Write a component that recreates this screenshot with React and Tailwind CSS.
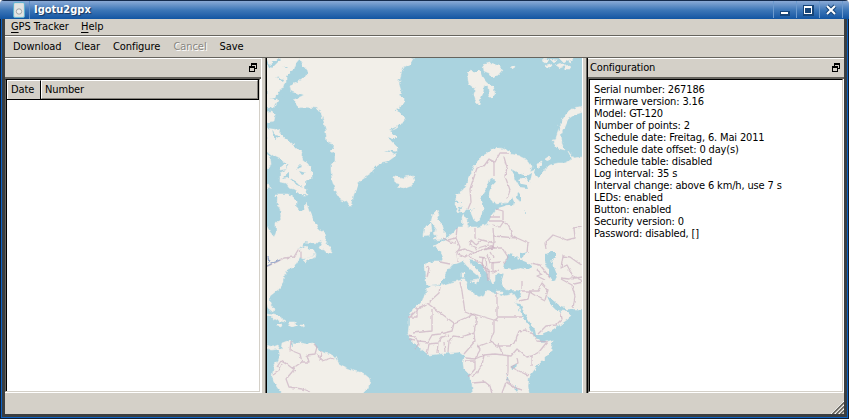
import React from "react";

const LAND = [
  // Greenland
  "M300 57L301 63L305 68L308 72L307 76L302 79L296 83L290 86L291 91L297 93L304 95L298 98L293 100L298 105L298 108L304 107L317 108L321 113L324 122L326 132L327 142L332 144L335 148L331 151L335 154L335 160L331 165L331 170L332 180L334 186L336 193L340 199L346 202L348 205L352 205L353 199L354 193L357 187L359 181L365 177L371 173L374 168L378 164L387 162L394 157L397 152L397 147L391 141L397 137L391 131L397 128L401 124L405 118L400 113L399 107L404 103L404 98L399 95L401 91L399 84L401 74L404 67L410 64L414 57Z",
  // Arctic Canada
  "M266 57L301 57L296 63L294 69L290 72L286 76L286 82L284 88L278 91L276 97L278 101L275 107L267 108Z",
  "M266 112L272 111L275 116L274 121L266 123Z",
  "M266 128L278 130L284 137L289 141L295 146L302 153L301 158L308 164L312 172L312 179L305 180L305 187L308 195L302 195L296 190L290 188L286 183L280 182L280 173L286 170L288 165L280 159L274 156L267 151Z",
  "M266 154L270 156L271 164L268 169L266 168Z",
  "M282 165L286 165L286 169L280 170ZM266 183L272 188L266 189ZM275 195L277 195L275 197Z",
  // Labrador, Quebec and the east coast
  "M278 194L288 194L293 198L296 201L296 208L301 211L305 208L306 202L309 211L314 221L318 228L325 233L326 238L319 243L305 242L298 249L306 246L309 250L315 250L314 254L307 258L303 259L300 257L297 262L294 267L288 269L284 275L284 282L280 288L275 292L270 296L270 303L274 309L273 312L268 308L266 300L266 225L270 232L274 237L276 233L276 223L281 217L280 208L277 203Z",
  "M322 242L324 237L326 237L325 243L330 247L332 253L327 252L319 248ZM303 261L309 257L316 254L315 257L306 262Z",
  "M282 275L284 275L284 280Z",
  // Caribbean
  "M266 314L274 315L280 317L286 321L285 322L280 321L274 318L266 316ZM289 322L294 322L298 325L292 327L288 325ZM278 325L282 325L281 327L278 326ZM301 325L305 325L304 327L301 326Z",
  // South America
  "M266 345L273 347L278 345L281 350L282 343L290 340L292 343L300 343L306 344L314 343L318 349L324 353L330 354L335 357L338 363L343 366L355 371L363 373L369 378L370 381L368 388L362 394L282 394L277 387L272 377L274 366L280 357L279 349L271 350L266 348Z",
  // Iceland
  "M394 177L397 175L401 180L405 177L413 175L415 181L411 186L403 189L397 187L400 184L395 183Z",
  // Svalbard
  "M467 73L470 70L475 73L479 69L482 77L487 83L493 86L495 94L492 98L489 96L488 87L484 84L483 93L480 100L479 105L475 101L473 94L475 89L469 84ZM483 65L490 63L499 66L502 70L498 75L493 78L489 73L484 71ZM511 67L514 65L515 67L512 69Z",
  // Franz Josef Land
  "M541 60L545 58L548 61L545 63ZM550 59L557 60L554 63ZM559 58L574 58L572 62L568 60L564 63ZM545 65L551 64L552 67L547 67ZM556 65L561 63L565 66L560 68ZM565 66L569 65L570 69L566 69Z",
  // Novaya Zemlya
  "M583 106L574 108L567 113L563 119L559 129L556 138L553 142L557 148L565 150L562 144L561 134L565 126L568 119L574 115L583 112Z",
  "M546 159L549 157L550 160L547 161Z",
  // Continental Europe and Asia
  "M583 157L574 158L569 151L571 155L572 160L565 163L558 163L550 165L545 169L540 172L536 171L541 166L542 162L537 164L537 168L530 171L532 166L527 160L519 156L511 154L510 152L501 148L492 149L486 154L481 157L478 162L474 166L471 174L467 184L463 190L457 194L455 204L457 211L463 213L468 209L471 207L471 213L474 220L477 222L480 218L483 211L483 205L480 199L483 193L487 187L491 178L496 178L496 182L491 187L489 194L491 200L497 204L508 202L502 205L496 207L495 212L491 217L488 224L478 227L470 227L467 226L468 220L464 214L462 218L463 227L458 227L454 232L448 237L445 241L438 244L434 246L441 251L443 258L440 262L433 262L425 264L426 274L425 282L429 286L438 285L445 278L445 274L452 265L458 263L463 261L467 266L473 271L479 276L478 280L482 275L479 272L472 265L469 259L475 260L482 266L486 272L490 277L492 284L495 281L495 276L500 273L504 274L501 281L503 287L508 290L517 290L522 291L520 298L517 300L519 309L523 316L528 326L534 337L539 336L550 331L561 324L568 319L571 315L567 311L562 311L556 309L552 303L548 297L554 301L559 305L566 309L583 309Z",
  // Great Britain and Ireland
  "M433 214L437 210L439 215L437 219L442 224L444 231L447 235L445 239L433 240L437 236L433 233L437 230L434 226L431 222ZM426 226L431 224L432 231L429 235L423 236L424 229Z",
  "M462 273L465 273L464 278L462 277ZM462 279L465 279L464 284L462 283ZM471 281L478 280L477 284L472 282ZM496 291L503 291L503 293L497 293ZM512 287L516 286L514 289Z",
  // Africa
  "M430 286L440 286L452 282L464 280L467 282L466 288L470 291L479 297L484 295L486 291L495 293L505 296L513 294L516 299L520 307L526 320L532 330L536 338L542 343L553 340L551 350L546 357L537 366L529 377L528 386L529 394L473 394L472 385L469 374L464 369L463 363L465 356L460 352L450 353L438 354L429 355L420 348L412 341L408 334L409 325L409 317L413 309L422 302L425 293Z",
];

const WATER = [
  // Red Sea
  "M515 301L518 304L520 303L524 312L529 321L535 330L536 335L543 335L547 337L540 340L535 337L531 331L524 318L519 309Z",
  // White Sea
  "M512 169L519 173L527 176L532 173L530 183L525 178L518 180L522 184L527 185L528 188L519 187L515 180Z",
  "M536 165L540 171L546 169L542 174L538 177L534 173Z",
  // Gulf of Finland and lakes
  "M490 206L508 203L512 197L514 202L513 206L508 205L498 208L493 211ZM518 192L521 195L521 201L517 199ZM524 209L526 212L524 213Z",
  "M473 209L475 208L472 212Z",
  // Black, Azov and Caspian seas
  "M508 254L514 255L518 259L526 262L532 267L529 270L520 268L512 270L503 268L505 261ZM520 254L526 252L524 257L520 259Z",
  "M545 254L550 252L556 252L556 256L551 261L554 267L557 275L555 281L549 277L549 270L545 262Z",
  // Persian Gulf
  "M547 296L552 300L560 306L564 307L563 312L557 311L551 305Z",
  "M301 199L305 199L304 205ZM318 228L321 227L320 230ZM303 243L310 243L306 246Z",
  "M511 366L517 365L516 369L512 370ZM507 374L509 381L507 380ZM515 385L518 390L516 393Z",
  "M292 341L293 346L291 345Z",
  // Arctic inlets
  "M266 60L271 66L268 68ZM270 65L279 58L281 59L272 68ZM285 96L276 99L270 98L276 97Z",
  "M289 66L282 67L287 68ZM283 79L276 77L282 81ZM272 130L275 135L280 136L275 139ZM276 181L274 176L280 178ZM290 178L294 183L302 187L297 182ZM300 165L296 169L302 167ZM289 172L282 178L289 177ZM306 173L299 171L302 175Z",
  "M398 126L389 130L397 131L390 132ZM400 141L387 137L395 144ZM399 152L384 150L394 154ZM335 145L329 148L334 150ZM401 109L395 110L401 113Z",
  "M455 200L462 203L456 203ZM458 209L463 206L459 211Z",
];

const BORDERS = [
  "M477 168L484 166L489 159L495 162L500 153L509 153M489 159L494 163L494 176M504 157L507 168L505 176L510 190L507 199",
  "M477 168L473 180L470 189L471 202L468 209",
  "M457 228L456 238L460 247L457 253L458 262M443 238L450 242L456 243M448 240L456 238M440 262L450 264M457 251L465 249L475 253L482 250L493 248L494 241L493 228",
  "M475 228L475 238L482 240L490 242L493 243M471 240L476 245L482 240M471 240L470 245L476 248L477 253",
  "M489 221L502 221L509 226L512 235L517 238L528 243L527 253M494 236L505 237L517 238M493 225L500 227L504 221M496 209L503 211L503 220M490 217L500 217",
  "M482 250L488 248L496 248L502 248L508 257L504 264M493 257L490 252M487 254L490 263L502 262M469 256L477 261L482 263L487 273L488 282M479 257L486 258L487 271L493 273L499 270",
  "M458 254L465 257L472 253M478 248L488 245L495 248M483 257L482 265L489 270L489 280M493 272L493 262",
  "M583 227L574 228L575 238L567 240L553 235L545 243L546 249M531 263L540 265L544 270L550 278M536 269L542 274L537 276L545 280M583 266L577 262L570 257L563 256L561 268L567 265L574 278L583 277M561 278L569 279L575 277L583 281",
  "M426 267L429 268L427 278M522 291L530 291L538 291L542 283L548 290L545 300M522 281L522 289M530 291L528 299L519 301M528 291L536 296L545 301M538 334L546 326L556 325M556 325L562 319L561 314M561 279L572 285L575 296L573 308M574 284L583 282",
  "M440 287L439 293L428 303L418 309L409 318M408 317L417 317L417 308L425 305M427 303L454 323L474 314L497 321M460 282L462 291L465 312L473 315M497 293L497 317L522 317M497 317L494 321L494 332L490 342L477 347",
  "M432 309L432 331L412 333M454 323L452 331L440 334L432 335L428 342L418 341M472 314L477 317L474 333L460 337L453 336M474 333L475 341L470 347L464 354M477 344L480 350L475 359L466 358",
  "M490 341L497 346L510 346L516 340L519 331M475 359L484 355L495 354L503 355L511 356L517 349L526 357L532 356L532 366M498 344L503 355M519 331L526 330L535 336L537 341L547 342L539 352L532 356",
  "M508 356L508 371L507 380L515 388L523 390M517 357L518 363L511 367L525 374L529 375M484 355L482 365L477 373L472 376M465 361L475 361L475 369L469 376M472 383L485 382L490 386L492 394M515 388L506 382L502 393",
  "M409 335L416 337L419 345L415 349M427 354L429 344L438 343L442 337L449 335M437 354L438 343M445 352L444 342M448 352L449 341L453 336",
  "M409 336L416 336M409 339L415 340",
  "M266 267L277 262L284 258L294 257L298 250L301 252L301 258",
  "M291 341L290 350L300 354L302 362L296 366L292 372L286 379L289 387L302 389L310 392M302 362L309 362L307 355L315 354L317 347L314 344M317 353L322 361L331 358L334 359M321 351L320 361M281 361L277 367M281 361L288 365L296 371M273 375L279 371L282 364",
];

const INFO = [
  "Serial number: 267186",
  "Firmware version: 3.16",
  "Model: GT-120",
  "Number of points: 2",
  "Schedule date: Freitag, 6. Mai 2011",
  "Schedule date offset: 0 day(s)",
  "Schedule table: disabled",
  "Log interval: 35 s",
  "Interval change: above 6 km/h, use 7 s",
  "LEDs: enabled",
  "Button: enabled",
  "Security version: 0",
  "Password: disabled, []",
];

function FloatIcon() {
  return (
    <svg width="8" height="9" viewBox="0 0 8 9" shapeRendering="crispEdges" className="shrink-0">
      <path d="M2 0h6v6H6V5h1V2H3v1H2z" fill="#000" />
      <path d="M0 3h6v6H0zM1 5v3h4V5z" fillRule="evenodd" fill="#000" />
    </svg>
  );
}

function DeviceIcon() {
  return (
    <svg width="12" height="16" viewBox="0 0 12 16">
      <rect x=".5" y=".5" width="11" height="15" rx="1.5" fill="#d8dddd" stroke="#62b3d2" />
      <rect x="2" y="2" width="8" height="12" fill="#e2e4e2" />
      <circle cx="6" cy="9.5" r="2.7" fill="#eee" stroke="#a0a5a5" />
    </svg>
  );
}

function WorldMap() {
  return (
    <svg width="315" height="335" viewBox="267 58 315 335" className="block shrink-0 bg-[#aad3df]">
      <defs>
        <filter id="coast" filterUnits="userSpaceOnUse" x="257" y="48" width="335" height="355" colorInterpolationFilters="sRGB">
          <feTurbulence type="fractalNoise" baseFrequency=".22" numOctaves="2" seed="4" result="noise" />
          <feDisplacementMap in="SourceGraphic" in2="noise" scale="4.5" xChannelSelector="R" yChannelSelector="G" />
          <feGaussianBlur stdDeviation=".35" />
        </filter>
        <filter id="soft" filterUnits="userSpaceOnUse" x="257" y="48" width="335" height="355" colorInterpolationFilters="sRGB">
          <feTurbulence type="fractalNoise" baseFrequency=".2" numOctaves="2" seed="9" result="noise" />
          <feDisplacementMap in="SourceGraphic" in2="noise" scale="3" xChannelSelector="R" yChannelSelector="G" />
          <feGaussianBlur stdDeviation=".3" />
        </filter>
      </defs>
      <g filter="url(#coast)">
        <rect x="250" y="40" width="350" height="370" fill="#aad3df" />
        {LAND.map((d) => (
          <path key={d} d={d} fill="#f2efe9" stroke="#f2efe9" strokeWidth=".5" strokeLinejoin="round" />
        ))}
        {WATER.map((d) => (
          <path key={d} d={d} fill="#aad3df" />
        ))}
      </g>
      <g filter="url(#soft)">
        {BORDERS.map((d) => (
          <path key={d} d={d} fill="none" stroke="#cbb0c2" strokeOpacity=".7" strokeWidth="1.3" strokeLinejoin="round" />
        ))}
        <path d="M267 266L273 263L280 260M268 256L269 263" stroke="#9aaacb" strokeWidth="1.3" fill="none" />
      </g>
    </svg>
  );
}

function TitleBar() {
  return (
    <div className="flex h-[19px] shrink-0 items-stretch border-t border-[#152b4d] bg-linear-to-b from-[#8aaad6] via-[#3d77b8] to-[#1055a2] pl-[5px]">
      <div className="flex w-[25px] items-center justify-center border-r border-[#5d8fc9] pl-1">
        <DeviceIcon />
      </div>
      <div className="flex-1 pt-px pl-[4px] text-[11px] leading-[15px] font-bold text-white [text-shadow:1px_1px_1px_#16365f]">
        Igotu2gpx
      </div>
      <svg width="76" height="18" viewBox="773 1 76 18">
        <path d="M773.5 1v17M796.5 1v17M819.5 1v17M842.5 1v17" stroke="#6c9ace" />
        <g shapeRendering="crispEdges">
          <path d="M780 11h10v5h-10zM803 5h11v11h-11z" fill="#174578" />
          <path d="M781 12h7v2h-7z" fill="#fff" />
          <path d="M804 6h8v8h-8zM805 8v5h6V8z" fillRule="evenodd" fill="#fff" />
        </g>
        <path d="M827 6l8 8M835 6l-8 8" stroke="#174578" strokeWidth="4" />
        <path d="M827 6l8 8M835 6l-8 8" stroke="#fff" strokeWidth="2" />
      </svg>
    </div>
  );
}

export default function App() {
  return (
    <div className="flex h-[419px] w-[849px] flex-col overflow-hidden rounded-t-[4px] bg-[#d4d0c8] font-['DejaVu_Sans_Condensed','DejaVu_Sans',sans-serif] text-[11px] leading-[12px] whitespace-nowrap text-black [font-stretch:condensed]">
      <TitleBar />
      <div className="flex h-[400px] border-x border-b border-[#101d30]">
        <div className="flex flex-1 border-x border-b border-[#0b62c4]">
          <div className="flex flex-1 flex-col border-x-[3px] border-b-[3px] border-[#3a3e41]">
            <div className="flex h-[17px] border-b border-[#66645e] pt-[2px] pl-[6px]">
              <span className="w-[70px] tracking-[-0.08px]"><u className="underline-offset-2">G</u>PS Tracker</span>
              <span><u className="underline-offset-2">H</u>elp</span>
            </div>
            <div className="flex h-[22px] border-t border-b border-t-white border-b-[#66645e] pt-[4px] pl-[8px] tracking-[-0.08px]">
              <span className="w-[61.5px]">Download</span>
              <span className="w-[38.5px]">Clear</span>
              <span className="w-[60.5px]">Configure</span>
              <span className="w-[46px] text-[#888681] [text-shadow:1px_1px_0_#fff]">Cancel</span>
              <span>Save</span>
            </div>
            <div className="flex h-[335px]">
              <section className="flex w-[256px] flex-col border-t border-white">
                <div className="flex h-[18px] justify-end pt-[4px] pr-[4px]"><FloatIcon /></div>
                <div className="h-[2px] bg-[#66645e]" />
                <div className="flex-1 border-r border-b border-white">
                  <div className="h-full border-t border-r border-b border-l border-t-black border-r-[#d4d0c8] border-b-[#d4d0c8] border-l-[#66645e]">
                    <div className="h-full border-l border-black bg-white">
                      <div className="flex h-[20px] border-r border-b border-black bg-[#d4d0c8] tracking-[-0.12px]">
                        <div className="w-[34px] border-t border-r border-l border-t-white border-r-black border-l-white pt-[3px] pl-[3px]">Date</div>
                        <div className="flex-1 border-t border-r border-b border-l border-t-white border-r-[#86837d] border-b-[#86837d] border-l-white pt-[3px] pl-[3px]">Number</div>
                      </div>
                    </div>
                  </div>
                </div>
              </section>
              <div className="w-[4px] border-l border-white" />
              <div className="w-px bg-[#66645e]" />
              <div className="w-px bg-black" />
              <WorldMap />
              <div className="w-[4px] border-l border-white" />
              <div className="w-px bg-[#66645e]" />
              <div className="w-px bg-black" />
              <section className="flex flex-1 flex-col border-t border-white">
                <div className="flex h-[18px] items-start justify-between pr-[4px] pl-[2px]">
                  <span className="pt-[3px] tracking-[-0.15px]">Configuration</span>
                  <span className="pt-[4px]"><FloatIcon /></span>
                </div>
                <div className="h-[2px] bg-[#66645e]" />
                <div className="flex-1 border-r border-b border-l border-r-white border-b-white border-l-[#66645e]">
                  <div className="h-full border-t border-r border-b border-l border-t-black border-r-[#d4d0c8] border-b-[#d4d0c8] border-l-black bg-white pt-[4px] pl-[4px] tracking-[-0.15px]">
                    {INFO.map((line) => (
                      <div key={line}>{line}</div>
                    ))}
                  </div>
                </div>
              </section>
            </div>
            <div className="flex flex-1 items-end justify-end">
              <svg width="13" height="13" viewBox="0 0 13 13">
                <path d="M0 13L13 0M4 13L13 4M8 13L13 8" stroke="#fff" strokeWidth="1" />
                <path d="M1.5 13L13 1.5M5.5 13L13 5.5M9.5 13L13 9.5" stroke="#66645e" strokeWidth="1.6" />
              </svg>
            </div>
          </div>
        </div>
      </div>
    </div>
  );
}
